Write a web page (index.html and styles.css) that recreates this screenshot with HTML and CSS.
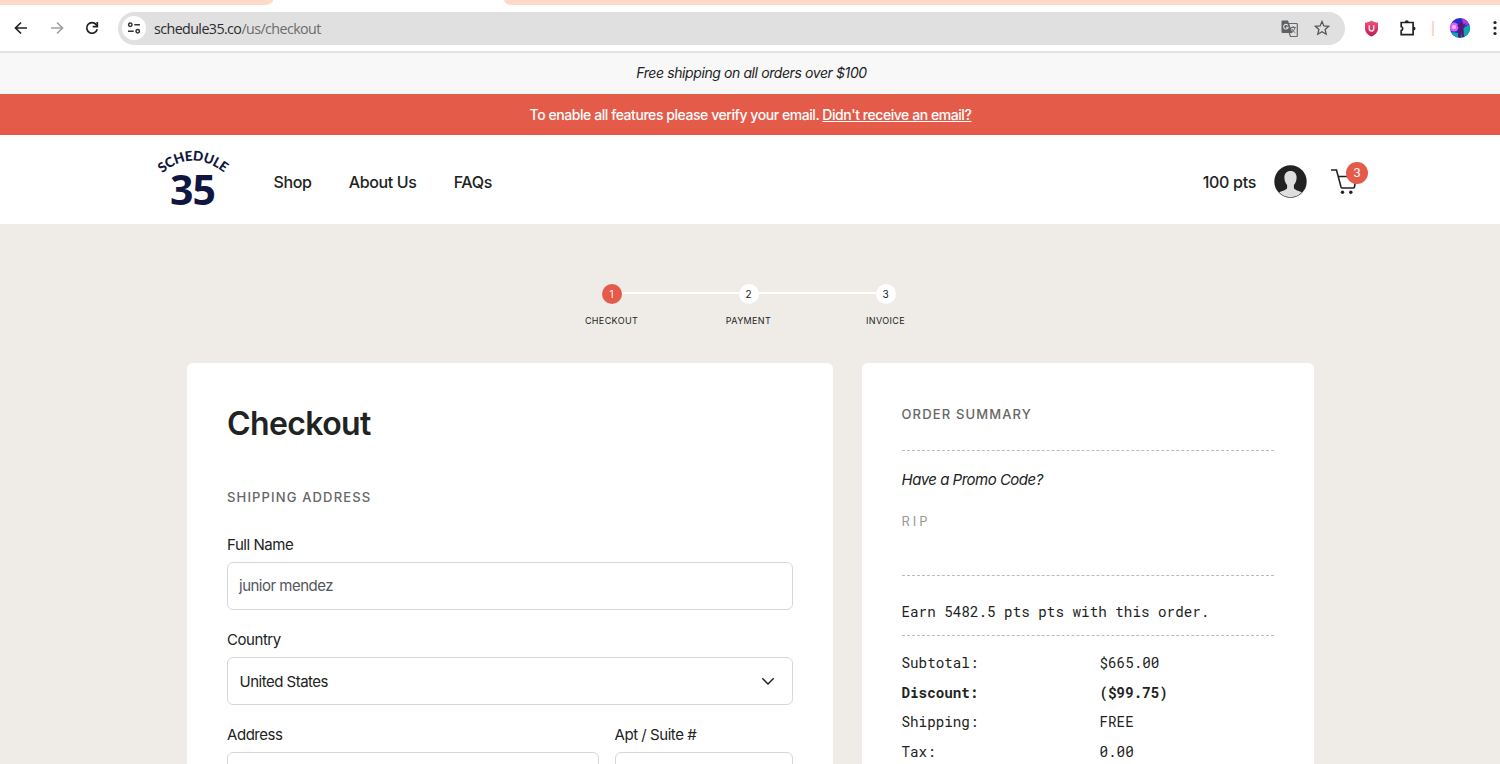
FILE: index.html
```html
<!DOCTYPE html>
<html lang="en">
<head>
    <meta charset="UTF-8">
    <title>Schedule35 - Checkout</title>
    <link rel="stylesheet" href="styles.css">
</head>
<body>
    <div class="browser">
        <div class="tabs">
            <div class="tab-left"></div>
            <div class="tab-right"></div>
        </div>
        <div class="toolbar">
            <svg class="nav-icon" width="16" height="16" viewBox="0 0 16 16"><path d="M14 8H3M8 2.5L2.5 8L8 13.5"/></svg>
            <svg class="nav-icon disabled" width="16" height="16" viewBox="0 0 16 16"><path d="M2 8h11M8 2.5L13.5 8L8 13.5"/></svg>
            <svg class="nav-icon" width="16" height="16" viewBox="0 0 16 16"><path d="M13.2 9.2A5.3 5.3 0 1 1 12.2 4.6L13.6 6.2"/><path d="M13.3 2v4.600H8.700"/></svg>
            <div class="url-bar">
                <span class="site-info">
                    <svg width="14" height="14" viewBox="0 0 14 14"><circle cx="3.3" cy="3.8" r="1.7"/><path d="M7.3 3.8H13M1 10.2h5.7"/><circle cx="10.7" cy="10.2" r="1.7"/></svg>
                </span>
                <span class="url">schedule35.co<span>/us/checkout</span></span>
                <svg class="translate" width="17" height="17" viewBox="0 0 17 17">
                    <path d="M1.5.5H7l4.5 12.5h-10a1 1 0 0 1-1-1v-10.500a1 1 0 0 1 1-1z" fill="#5f6163"/>
                    <path d="M8 3.500h7.500a.8.8 0 0 1 .8.8v11.400a.8.8 0 0 1-.8.8H9.500L8.300 13" fill="none" stroke="#66686a" stroke-width="1.200"/>
                    <path d="M6.800 5.300A2.300 2.300 0 1 0 7.200 7.200H5" fill="none" stroke="#e0e0e0" stroke-width="1.100"/>
                    <path d="M9.800 7.500h5M12.200 6v1.500M14 7.500c-.4 2.200-1.800 4-3.600 5.200M10.700 8.700c.8 1.800 2 3 3.600 4" fill="none" stroke="#66686a"/>
                </svg>
                <svg class="star" width="16" height="16" viewBox="0 0 16 16"><path d="M8 1.500l1.900 4.400 4.800.4-3.600 3.200 1.100 4.700L8 11.700l-4.200 2.500 1.100-4.700L1.300 6.300l4.800-.4z"/></svg>
            </div>
            <svg class="shield" width="15" height="17" viewBox="0 0 15 17">
                <defs><linearGradient id="pink" x2="0" y2="1"><stop offset="0" stop-color="#f1537a"/><stop offset="1" stop-color="#c0195b"/></linearGradient></defs>
                <path d="M7.500.5C9.500 2 12 2.600 14 2.700v6c0 3.500-3 6.300-6.500 7.800C4 15 1 12.200 1 8.700v-6c2-.1 4.500-.7 6.500-2.200z" fill="url(#pink)"/>
                <path d="M5.300 5.200v3.600a2.200 2.200 0 0 0 4.400 0V5.200" fill="none" stroke="#ffd9e6" stroke-width="1.500"/>
            </svg>
            <svg class="puzzle" width="18" height="18" viewBox="0 0 18 18">
                <path d="M2.200 3.500h11.900v12.200H2.200v-4.100c2-.5 2-3.600 0-4.100z"/>
                <path class="knob" d="M5.800 3.200a2 2 0 0 1 4 0zM14.500 7.500a2 2 0 0 1 0 4z"/>
            </svg>
            <span class="divider"></span>
            <svg class="profile" width="20" height="20" viewBox="0 0 20 20">
                <defs><clipPath id="round"><circle cx="10" cy="10" r="10"/></clipPath></defs>
                <g clip-path="url(#round)">
                    <path fill="#2630c8" d="M0 0h20v20H0z"/>
                    <path fill="#10a7b5" d="M12 11l8-5v14h-9zM0 14l8 1v5H0z"/>
                    <circle cx="4" cy="9" r="4.500" fill="#e05cf5"/>
                    <circle cx="4" cy="9" r="2" fill="#ffc4ff"/>
                    <path fill="#ba35e8" d="M12 1l7-1v6l-5 2z"/>
                    <path fill="#5b1670" d="M10 4h2l.5 3 3.500-2-2.500 4.500L14 19h-2l-.8-5L10 19H8l1-9-2-3 2.500.5z"/>
                </g>
            </svg>
            <svg class="dots" width="4" height="16" viewBox="0 0 4 16"><circle cx="2" cy="2.500" r="1.600"/><circle cx="2" cy="8" r="1.600"/><circle cx="2" cy="13.500" r="1.600"/></svg>
        </div>
    </div>

    <div class="shipping-bar"><span>Free shipping on all orders over $100</span></div>
    <div class="verify-bar"><span>To enable all features please verify your email. <a href="#">Didn't receive an email?</a></span></div>

    <header class="header">
        <svg class="logo" width="76" height="60" viewBox="0 0 76 60">
            <path id="arc" d="M7.200 25.300Q38 -.5 71.500 26.500" fill="none"/>
            <text class="logo-name"><textPath href="#arc" textLength="68">SCHEDULE</textPath></text>
            <text class="logo-number" x="15" y="57" textLength="46">35</text>
        </svg>
        <nav class="menu">
            <a href="#">Shop</a>
            <a href="#">About Us</a>
            <a href="#">FAQs</a>
        </nav>
        <span class="points">100 pts</span>
        <svg class="avatar" width="33" height="33" viewBox="0 0 33 33">
            <defs><clipPath id="face"><circle cx="16.500" cy="16.500" r="15.700"/></clipPath></defs>
            <circle cx="16.500" cy="16.500" r="16.200" fill="#222"/>
            <path clip-path="url(#face)" fill="#dedede" d="M16.500 6c4 0 6.300 2.800 6.100 6.700-.1 3.500-1.300 5.700-2.700 7.200v3.300c1 2.200 6.500 2.500 9.100 5.300v5H4v-5c2.600-2.800 8.100-3.100 9.100-5.300v-3.300c-1.400-1.500-2.600-3.700-2.700-7.200C10.200 8.800 12.500 6 16.500 6z"/>
        </svg>
        <div class="cart">
            <svg width="28" height="28" viewBox="0 0 28 28"><path d="M0 2h5.500l4.500 17q.3 1 1.400 1H22q1.200 0 1.500-1L25 8.500H7.200"/><circle cx="11.500" cy="24.300" r="1.700"/><circle cx="19.800" cy="24.300" r="1.700"/></svg>
            <span class="badge">3</span>
        </div>
    </header>

    <main class="page">
        <ol class="steps">
            <li class="step active"><span class="number">1</span><span class="step-name">Checkout</span></li>
            <li class="step"><span class="number">2</span><span class="step-name">Payment</span></li>
            <li class="step"><span class="number">3</span><span class="step-name">Invoice</span></li>
        </ol>
        <div class="columns">
            <form class="card checkout">
                <h1>Checkout</h1>
                <h2>Shipping Address</h2>
                <label class="field">
                    <span class="label">Full Name</span>
                    <span class="input name">junior mendez</span>
                </label>
                <label class="field">
                    <span class="label">Country</span>
                    <span class="input">United States
                        <svg width="14" height="9" viewBox="0 0 14 9"><path d="M1.300 1.200L7 7l5.700-5.800"/></svg>
                    </span>
                </label>
                <div class="row">
                    <label class="field">
                        <span class="label">Address</span>
                        <span class="input"></span>
                    </label>
                    <label class="field">
                        <span class="label">Apt / Suite #</span>
                        <span class="input"></span>
                    </label>
                </div>
            </form>
            <aside class="card summary">
                <h2>Order Summary</h2>
                <div class="promo">
                    <p class="question">Have a Promo Code?</p>
                    <p class="code">RIP</p>
                </div>
                <p class="earn">Earn 5482.5 pts pts with this order.</p>
                <dl class="totals">
                    <dt>Subtotal:</dt><dd>$665.00</dd>
                    <dt class="bold">Discount:</dt><dd class="bold">($99.75)</dd>
                    <dt>Shipping:</dt><dd>FREE</dd>
                    <dt>Tax:</dt><dd>0.00</dd>
                </dl>
            </aside>
        </div>
    </main>
</body>
</html>
```
FILE: styles.css
```css
* {
    box-sizing: border-box;
}
body {
    margin: 0;
    height: 764px;
    overflow: hidden;
    display: flex;
    flex-direction: column;
    font-family: Inter, sans-serif;
    font-size: 15px;
    color: #212322;
    background-color: #efece8;
}
h1, h2, p, ol, dl, dd {
    margin: 0;
    padding: 0;
}
a {
    color: inherit;
    text-decoration: none;
}
svg {
    flex-shrink: 0;
}

/* browser window */
.browser {
    height: 53px;
    flex-shrink: 0;
    background-color: #fff;
    border-bottom: 2px solid #e2e2e2;
}
.tabs {
    display: flex;
    justify-content: space-between;
    height: 5px;
}
.tab-left {
    width: 273px;
    background-color: #fdd9c9;
    border-bottom-right-radius: 8px 5px;
}
.tab-right {
    width: 996px;
    background-color: #fdd9c9;
    border-bottom-left-radius: 8px 5px;
}
.toolbar {
    display: flex;
    align-items: center;
    height: 46px;
    padding-left: 13px;
}
.nav-icon {
    margin-right: 19.5px;
    fill: none;
    stroke: #222;
    stroke-width: 1.7;
}
.nav-icon.disabled {
    stroke: #a1a1a1;
}
.url-bar {
    display: flex;
    align-items: center;
    width: 1227px;
    height: 33px;
    margin-left: -1.5px;
    padding: 0 15px 0 4px;
    border-radius: 17px;
    background-color: #e0e0e0;
}
.site-info {
    display: flex;
    align-items: center;
    justify-content: center;
    width: 24px;
    height: 24px;
    border-radius: 50%;
    background-color: #fff;
}
.site-info svg {
    fill: none;
    stroke: #333;
    stroke-width: 1.5;
}
.url {
    margin-left: 8px;
    margin-right: auto;
    padding-top: 1px;
    font-family: "Open Sans", sans-serif;
    font-size: 14.3px;
    letter-spacing: -0.6px;
    color: #2c2c2c;
}
.url span {
    color: #6c6c6c;
}
.star {
    margin-left: 16px;
    fill: none;
    stroke: #555;
    stroke-width: 1.3;
}
.shield {
    margin-left: 19px;
}
.puzzle {
    margin-left: 20px;
    fill: none;
    stroke: #222;
    stroke-width: 1.7;
}
.puzzle .knob {
    fill: #222;
    stroke: none;
}
.divider {
    width: 2px;
    height: 15px;
    margin: 0 16px 0 15px;
    background-color: #fdd9c9;
}
.dots {
    margin-left: 23px;
    fill: #222;
}

/* notices */
.shipping-bar, .verify-bar {
    display: flex;
    align-items: center;
    justify-content: center;
    flex-shrink: 0;
    height: 41px;
    font-size: 14px;
}
.shipping-bar {
    padding-left: 3px;
    padding-bottom: 2px;
    font-style: italic;
    letter-spacing: -0.4px;
    background-color: #f8f8f8;
}
.verify-bar {
    padding-left: 1px;
    color: #fff;
    font-weight: 500;
    letter-spacing: -0.44px;
    background-color: #e45c49;
}
.verify-bar a {
    text-decoration: underline;
}

/* header */
.header {
    display: flex;
    align-items: center;
    flex-shrink: 0;
    height: 89px;
    padding: 0 132px 0 155px;
    background-color: #fff;
}
.logo {
    fill: #10163f;
    margin-bottom: 4px;
    overflow: visible;
}
.logo-name {
    font-family: Lato, sans-serif;
    font-size: 13.5px;
    font-weight: 900;
}
.logo-number {
    font-family: "Open Sans", sans-serif;
    font-size: 41px;
    font-weight: 700;
}
.menu {
    display: flex;
    gap: 37.3px;
    margin-left: 42.5px;
    margin-right: auto;
    padding-top: 4px;
    font-size: 16px;
    font-weight: 500;
    letter-spacing: -0.38px;
}
.points {
    padding-top: 4px;
    font-size: 16px;
    font-weight: 500;
    letter-spacing: -0.3px;
}
.avatar {
    margin: 4px 0 0 18px;
}
.cart {
    position: relative;
    display: flex;
    width: 37px;
    margin-left: 24px;
    padding-top: 5px;
}
.cart svg {
    fill: #222;
}
.cart path {
    fill: none;
    stroke: #222;
    stroke-width: 1.6;
}
.badge {
    position: absolute;
    right: 0;
    top: -1px;
    width: 22px;
    height: 22px;
    border-radius: 50%;
    font-size: 12px;
    line-height: 22px;
    text-align: center;
    color: #fff;
    background-color: #e45c49;
}

/* checkout steps */
.page {
    padding-top: 60px;
}
.steps {
    display: flex;
    width: 411px;
    margin: 0 auto 36px 543px;
    list-style: none;
}
.step {
    position: relative;
    display: flex;
    flex-direction: column;
    align-items: center;
    width: 137px;
    font-size: 9px;
}
/* line to the next step */
.step:not(:last-child)::after {
    content: "";
    position: absolute;
    left: 79px;
    top: 8px;
    width: 117px;
    height: 2px;
    background-color: #fff;
}
.number {
    width: 20px;
    height: 20px;
    border-radius: 50%;
    font-size: 10px;
    line-height: 20px;
    text-align: center;
    background-color: #fff;
}
.step.active .number {
    color: #fff;
    background-color: #e45c49;
}
.step-name {
    margin-top: 11px;
    line-height: 12px;
    letter-spacing: 0.35px;
    text-transform: uppercase;
}

/* cards */
.columns {
    display: grid;
    grid-template-columns: 646px 452.5px;
    gap: 28.5px;
    padding-left: 187px;
}
.card {
    height: 440px;
    padding: 40px;
    border-radius: 6px;
    background-color: #fff;
}
h1 {
    font-size: 32px;
    font-weight: 600;
    line-height: 42px;
    letter-spacing: -0.6px;
}
h2 {
    font-size: 13px;
    font-weight: 500;
    line-height: 20px;
    letter-spacing: 1.15px;
    text-transform: uppercase;
    color: #666;
}
.checkout h2 {
    margin-top: 42px;
    margin-bottom: 28px;
}
.field {
    display: block;
    margin-bottom: 20px;
}
.label {
    display: block;
    line-height: 20px;
    margin-bottom: 7px;
    letter-spacing: -0.45px;
}
.input {
    display: flex;
    align-items: center;
    justify-content: space-between;
    height: 48px;
    padding: 0 17px 0 11.5px;
    border: 1px solid #d5d7d9;
    border-radius: 6px;
    letter-spacing: -0.5px;
}
.input.name {
    padding-left: 11px;
    padding-bottom: 1px;
    color: #54565b;
}
.input svg {
    fill: none;
    stroke: #222;
    stroke-width: 1.5;
}
.row {
    display: grid;
    grid-template-columns: 372px 178px;
    gap: 15.5px;
}

/* order summary */
.summary h2 {
    height: 47px;
    padding-top: 1px;
}
.promo {
    height: 125px;
    padding-top: 18px;
    border-top: 1px dashed #bbb;
}
.question {
    font-style: italic;
    line-height: 22px;
    letter-spacing: -0.5px;
}
.code {
    margin-top: 20px;
    font-size: 13px;
    line-height: 20px;
    letter-spacing: 3px;
    color: #999;
}
.earn, .totals {
    font-family: "Roboto Mono", "DejaVu Sans Mono", monospace;
    font-size: 14.25px;
}
.earn {
    height: 60px;
    padding-top: 26px;
    line-height: 20px;
    border-top: 1px dashed #bbb;
}
.totals {
    display: grid;
    grid-template-columns: 198px 1fr;
    padding-top: 12px;
    line-height: 29.5px;
    border-top: 1px dashed #bbb;
}
.bold {
    font-weight: 700;
}
```
